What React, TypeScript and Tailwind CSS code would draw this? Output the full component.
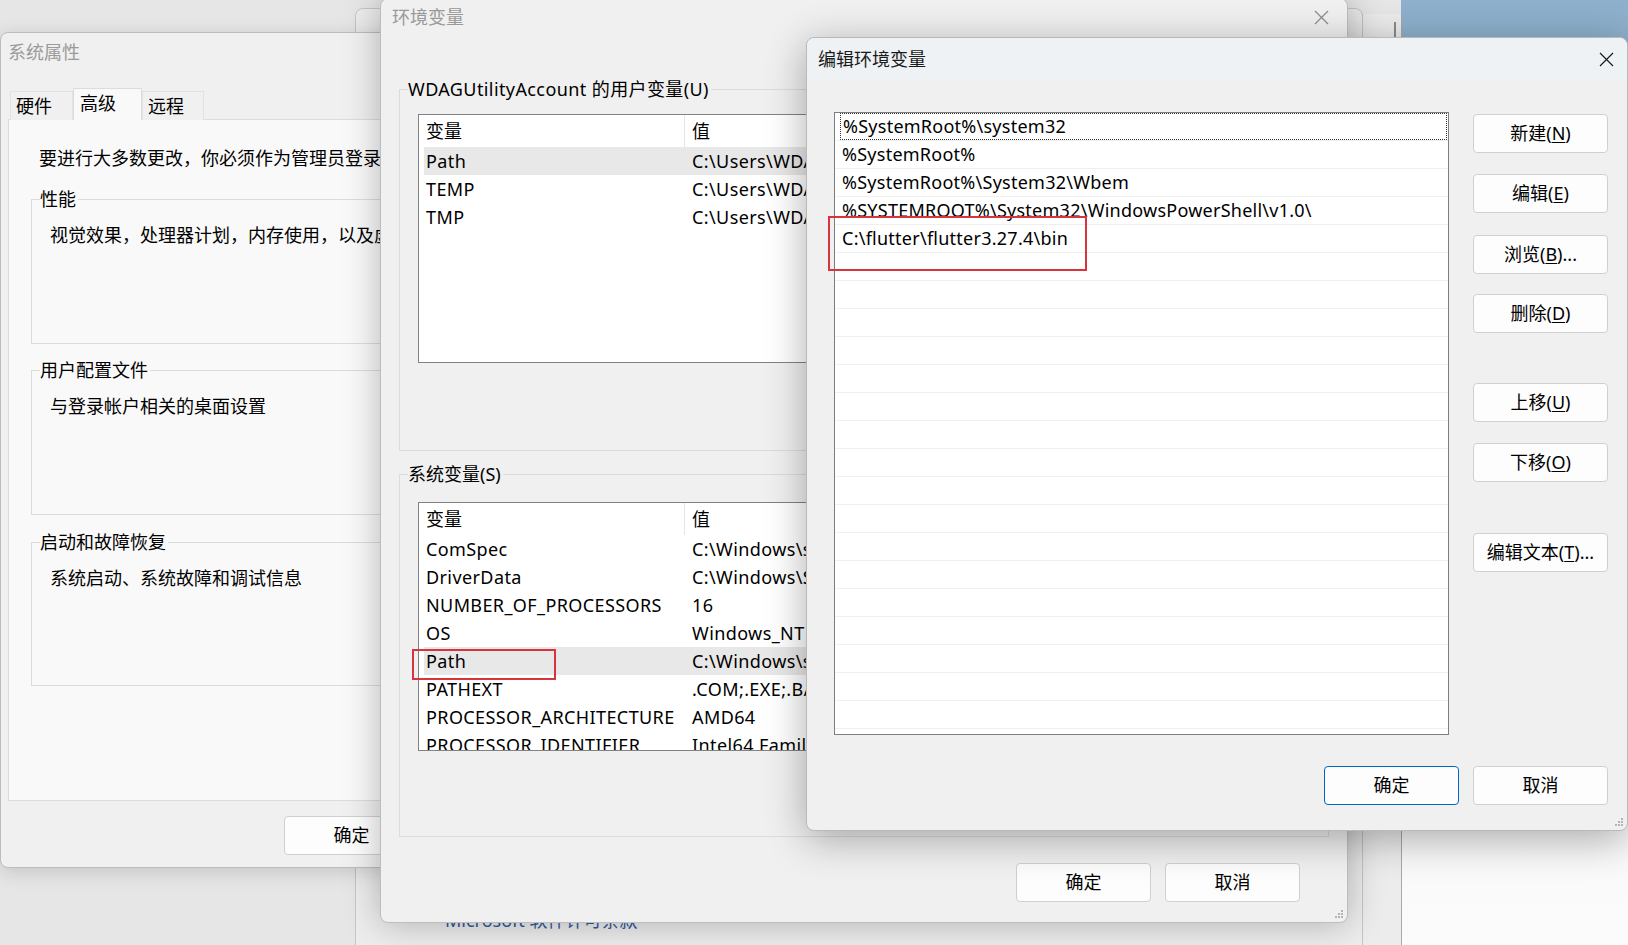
import React from 'react';
import clsx from 'clsx';

const font = "font-['Noto_Sans','Noto_Sans_CJK_SC',sans-serif]";

// Windows dialog push button
const Btn: React.FC<{ children: React.ReactNode; primary?: boolean; className?: string }> = ({
  children,
  primary,
  className,
}) => (
  <div
    className={clsx(
      'flex h-[39px] w-[135px] shrink-0 items-center justify-center rounded-[4px] border bg-[#fdfdfd] text-[18px] text-black',
      primary ? 'border-[#0067c0]' : 'border-[#d0d0d0]',
      className
    )}
  >
    {children}
  </div>
);

const Mn: React.FC<{ label: string; k: string; dots?: boolean }> = ({ label, k, dots }) => (
  <span>
    {label}(<span className="underline underline-offset-2">{k}</span>){dots ? '...' : ''}
  </span>
);

const CloseX: React.FC<{ color: string }> = ({ color }) => (
  <svg width="15" height="15" viewBox="0 0 15 15" fill="none">
    <path d="M1 1L14 14M14 1L1 14" stroke={color} strokeWidth="1.2" />
  </svg>
);

const Grip: React.FC = () => (
  <svg width="10" height="10" viewBox="0 0 10 10" className="absolute bottom-[3px] right-[3px]">
    <rect x="7" y="1" width="2" height="2" fill="#b4b4b4" />
    <rect x="4" y="4" width="2" height="2" fill="#b4b4b4" />
    <rect x="7" y="4" width="2" height="2" fill="#b4b4b4" />
    <rect x="1" y="7" width="2" height="2" fill="#b4b4b4" />
    <rect x="4" y="7" width="2" height="2" fill="#b4b4b4" />
    <rect x="7" y="7" width="2" height="2" fill="#b4b4b4" />
  </svg>
);

// group box with caption sitting on the top border
const GroupBox: React.FC<{
  title: string;
  bg: string;
  className?: string;
  children?: React.ReactNode;
}> = ({ title, bg, className, children }) => (
  <div className={clsx('relative border border-[#dcdcdc]', className)}>
    <div className={clsx('absolute -top-[14px] left-[8px] pr-[2px] leading-[26px] whitespace-nowrap', bg)}>
      {title}
    </div>
    {children}
  </div>
);

type Row = [string, string];

const VarList: React.FC<{ rows: Row[]; selected: string }> = ({ rows, selected }) => (
  <div className="h-[249px] overflow-hidden border border-[#828282] bg-white">
    <div className="flex h-[32px] items-center">
      <div className="flex h-full w-[266px] shrink-0 items-center border-r border-[#e5e5e5] pl-[7px]">变量</div>
      <div className="pl-[7px]">值</div>
    </div>
    {rows.map(([name, value]) => (
      <div
        key={name}
        className={clsx(
          'ml-[5px] flex h-[28px] items-center whitespace-nowrap tracking-[0.4px]',
          name === selected && 'bg-[#e8e8e8]'
        )}
      >
        <div className="w-[262px] shrink-0 pl-[2px]">{name}</div>
        <div className="shrink-0 pl-[6px]">{value}</div>
      </div>
    ))}
  </div>
);

const userRows: Row[] = [
  ['Path', 'C:\\Users\\WDAGUtilityAccount\\AppData\\Local\\Microsoft\\WindowsApps;'],
  ['TEMP', 'C:\\Users\\WDAGUtilityAccount\\AppData\\Local\\Temp'],
  ['TMP', 'C:\\Users\\WDAGUtilityAccount\\AppData\\Local\\Temp'],
];

const sysRows: Row[] = [
  ['ComSpec', 'C:\\Windows\\system32\\cmd.exe'],
  ['DriverData', 'C:\\Windows\\System32\\Drivers\\DriverData'],
  ['NUMBER_OF_PROCESSORS', '16'],
  ['OS', 'Windows_NT'],
  ['Path', 'C:\\Windows\\system32;C:\\Windows;'],
  ['PATHEXT', '.COM;.EXE;.BAT;.CMD;.VBS;.VBE;.JS'],
  ['PROCESSOR_ARCHITECTURE', 'AMD64'],
  ['PROCESSOR_IDENTIFIER', 'Intel64 Family 6 Model 183'],
];

const pathItems = [
  '%SystemRoot%\\system32',
  '%SystemRoot%',
  '%SystemRoot%\\System32\\Wbem',
  '%SYSTEMROOT%\\System32\\WindowsPowerShell\\v1.0\\',
  'C:\\flutter\\flutter3.27.4\\bin',
];

const SystemProps: React.FC = () => (
  <div className="absolute left-0 top-[32px] h-[836px] w-[735px] overflow-hidden rounded-lg border border-[#bcbcbc] bg-[#f0f0f0] shadow-[0_4px_20px_rgba(0,0,0,0.15)]">
    <div className="flex h-[38px] items-center pl-[7px] text-[#9a9a9a]">系统属性</div>
    {/* tabs */}
    <div className="relative z-10 mt-[17px] -mb-px flex items-end pl-[9px]">
      <div className="flex h-[29px] w-[63px] items-center border border-b-0 border-[#e2e2e2] bg-[#f0f0f0] pl-[5px]">硬件</div>
      <div className="flex h-[32px] w-[69px] items-center border border-b-0 border-[#dcdcdc] bg-[#f9f9f9] pb-[3px] pl-[6px]">高级</div>
      <div className="flex h-[29px] w-[62px] items-center border border-b-0 border-[#e2e2e2] bg-[#f0f0f0] pl-[5px]">远程</div>
    </div>
    <div className="ml-[7px] mr-[8px] h-[682px] border border-[#dcdcdc] bg-[#f9f9f9] pl-[22px] pr-[22px] pt-[25px]">
      <div className="pl-[8px] leading-[26px] whitespace-nowrap">要进行大多数更改，你必须作为管理员登录才能进行这些更改。</div>
      <GroupBox title="性能" bg="bg-[#f9f9f9]" className="mt-[28px] h-[145px] pl-[18px] pt-[22px]">
        <div className="leading-[26px] whitespace-nowrap">视觉效果，处理器计划，内存使用，以及虚拟内存</div>
      </GroupBox>
      <GroupBox title="用户配置文件" bg="bg-[#f9f9f9]" className="mt-[26px] h-[145px] pl-[18px] pt-[22px]">
        <div className="leading-[26px] whitespace-nowrap">与登录帐户相关的桌面设置</div>
      </GroupBox>
      <GroupBox title="启动和故障恢复" bg="bg-[#f9f9f9]" className="mt-[27px] h-[144px] pl-[18px] pt-[22px]">
        <div className="leading-[26px] whitespace-nowrap">系统启动、系统故障和调试信息</div>
      </GroupBox>
    </div>
    <div className="mt-[15px] flex justify-end gap-[14px] pr-[17px]">
      <Btn>确定</Btn>
      <Btn>取消</Btn>
      <Btn>应用(A)</Btn>
    </div>
  </div>
);

const EnvVars: React.FC = () => (
  <div className="absolute left-[380px] top-[-2px] h-[925px] w-[968px] rounded-lg border border-[#bdbdbd] bg-[#f0f0f0] shadow-[0_0_36px_rgba(0,0,0,0.28)]">
    <div className="flex h-[36px] items-center justify-between pl-[11px] pr-[18px] text-[#999999]">
      <span>环境变量</span>
      <CloseX color="#8c8c8c" />
    </div>
    <div className="px-[18px]">
      <GroupBox
        title="WDAGUtilityAccount 的用户变量(U)"
        bg="bg-[#f0f0f0] tracking-[0.4px]"
        className="mt-[54px] h-[362px] px-[18px] pt-[24px]"
      >
        <VarList rows={userRows} selected="Path" />
      </GroupBox>
      <GroupBox title="系统变量(S)" bg="bg-[#f0f0f0]" className="mt-[23px] h-[363px] px-[18px] pt-[27px]">
        <VarList rows={sysRows} selected="Path" />
        <div className="absolute left-[12px] top-[174px] h-[31px] w-[144px] border-2 border-[#d8343d]" />
      </GroupBox>
    </div>
    <div className="mt-[26px] flex justify-end gap-[14px] pr-[47px]">
      <Btn>确定</Btn>
      <Btn>取消</Btn>
    </div>
    <Grip />
  </div>
);

const EditEnv: React.FC = () => (
  <div className="absolute left-[806px] top-[37px] h-[794px] w-[822px] rounded-lg border border-[#b9b9b9] bg-[#f0f0f0] shadow-[0_8px_40px_rgba(0,0,0,0.32)]">
    <div className="flex h-[42px] items-center justify-between rounded-t-lg bg-[#eff2f5] pl-[11px] pr-[13px] text-[#1a1a1a]">
      <span>编辑环境变量</span>
      <CloseX color="#1a1a1a" />
    </div>
    <div className="flex pl-[27px] pt-[32px]">
      <div className="h-[623px] w-[615px] overflow-hidden border border-[#7e7e7e] bg-white">
        {Array.from({ length: 23 }).map((_, i) => (
          <div key={i} className="h-[28px] border-b border-[#efefef]">
            <div
              className={clsx(
                'ml-[5px] flex h-[27px] items-center pl-[2px] whitespace-nowrap tracking-[0.25px]',
                i === 0 && 'mr-px border border-dotted border-[#333]'
              )}
            >
              {pathItems[i] ?? ''}
            </div>
          </div>
        ))}
      </div>
      <div className="ml-[24px] flex flex-col pt-[2px]">
        <Btn><Mn label="新建" k="N" /></Btn>
        <Btn className="mt-[21px]"><Mn label="编辑" k="E" /></Btn>
        <Btn className="mt-[22px]"><Mn label="浏览" k="B" dots /></Btn>
        <Btn className="mt-[20px]"><Mn label="删除" k="D" /></Btn>
        <Btn className="mt-[50px]"><Mn label="上移" k="U" /></Btn>
        <Btn className="mt-[21px]"><Mn label="下移" k="O" /></Btn>
        <Btn className="mt-[51px]"><Mn label="编辑文本" k="T" dots /></Btn>
      </div>
    </div>
    <div className="mt-[31px] flex justify-end gap-[14px] pr-[19px]">
      <Btn primary>确定</Btn>
      <Btn>取消</Btn>
    </div>
    <div className="absolute left-[21px] top-[178px] h-[55px] w-[259px] border-2 border-[#d8343d]" />
    <Grip />
  </div>
);

export default function App() {
  return (
    <div className={clsx('relative h-[945px] w-[1628px] overflow-hidden bg-[#e6e6e6] text-[18px] text-black', font)}>
      {/* desktop wallpaper strip and windows further back */}
      <div className="absolute left-[1401px] top-0 h-[60px] w-[227px] bg-[#8eb0cc]" />
      <div className="absolute left-[1401px] top-[60px] h-[885px] w-[227px] bg-gradient-to-b from-[#e9e9e9] to-[#fbfbfb]" />
      <div className="absolute left-[1362px] top-[14px] h-[960px] w-[40px] border-x border-[#a9a9a9] bg-[#ececec]" />
      <div className="absolute left-[1394px] top-[22px] h-[16px] w-[2px] bg-[#8a8a8a]" />
      <div className="absolute left-[355px] top-[8px] h-[960px] w-[1008px] rounded-lg border border-[#c6c6c6] bg-[#ededed]">
        <div className="pl-[89px] pt-[898px] text-[#2c5a9e]">Microsoft 软件许可条款</div>
      </div>

      <SystemProps />
      <EnvVars />
      <EditEnv />
    </div>
  );
}
